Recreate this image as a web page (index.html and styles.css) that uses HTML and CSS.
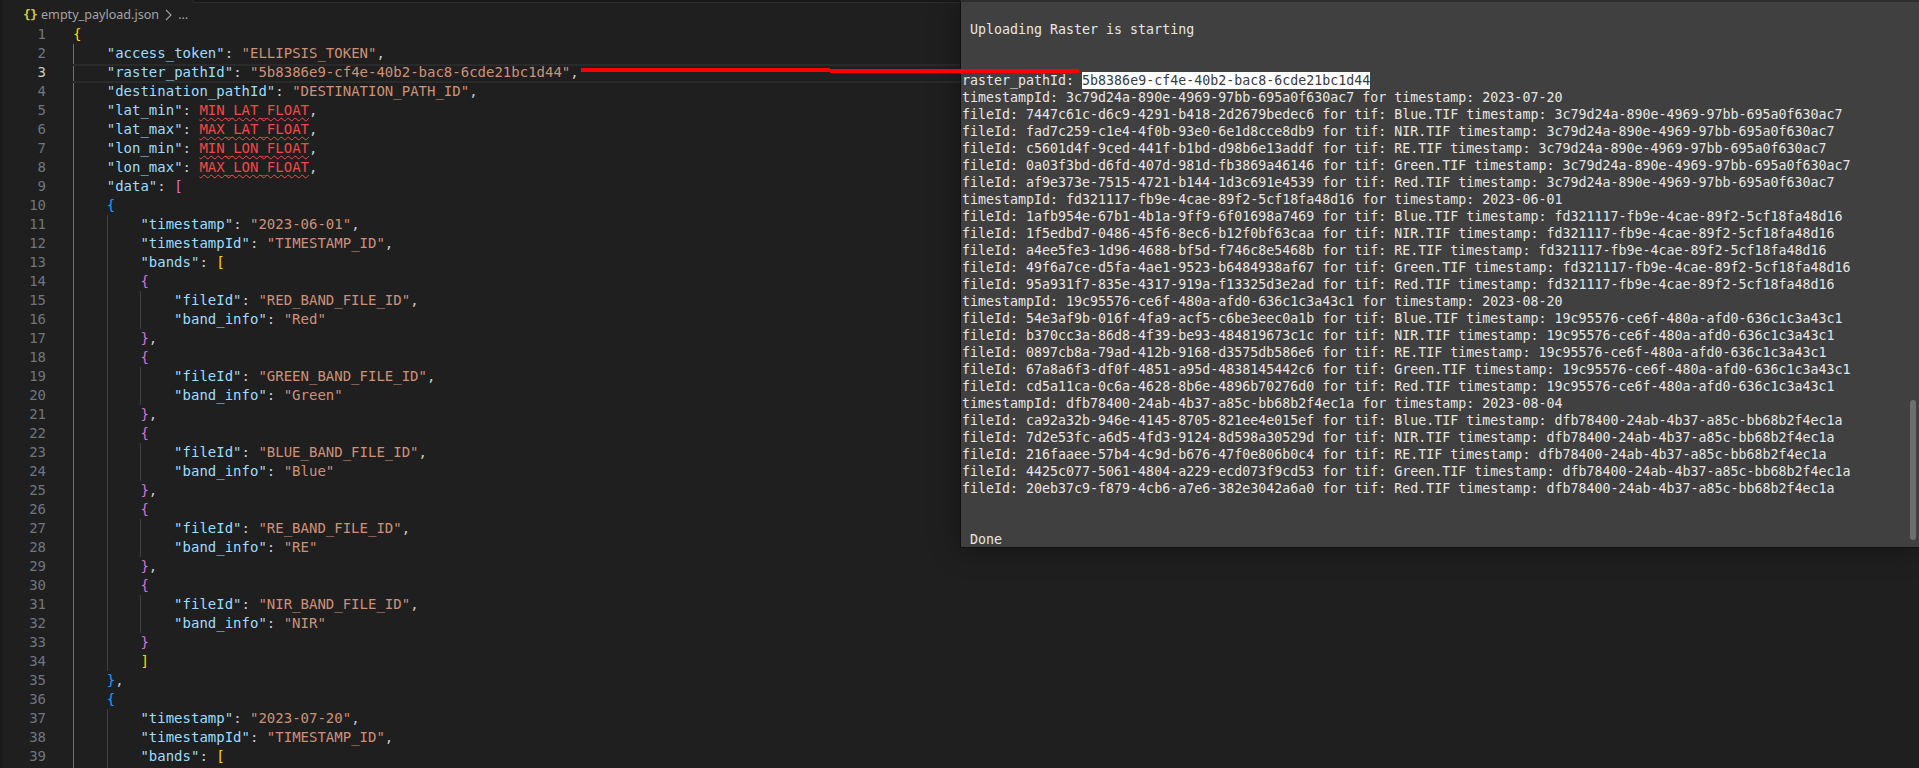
FILE: index.html
```html
<!DOCTYPE html>
<html lang="en">
<head>
<meta charset="utf-8">
<title>empty_payload.json</title>
<link rel="stylesheet" href="styles.css">
</head>
<body>
<main class="editor">
  <div class="tabstrip"><div class="tabstrip-rest"></div></div>
  <nav class="crumbs">
    <span class="file-icon"><span class="ic-a">{</span><span class="ic-b">}</span></span>
    <span class="crumb">empty_payload.json</span>
    <svg class="chev" width="7" height="12" viewBox="0 0 7 12"><path d="M1 1l5 5-5 5" fill="none" stroke="#a0a0a0" stroke-width="1.1"/></svg>
    <span class="crumb">…</span>
  </nav>
  <div class="code">
    <div class="ln"><span class="num">1</span><span class="txt"><b class="y">{</b></span></div>
    <div class="ln"><span class="num">2</span><span class="txt"><i class="g a"></i><b class="k">"access_token"</b>: <b class="s">"ELLIPSIS_TOKEN"</b>,</span></div>
    <div class="ln cur"><span class="num">3</span><span class="txt"><i class="g a"></i><b class="k">"raster_pathId"</b>: <b class="s">"5b8386e9-cf4e-40b2-bac8-6cde21bc1d44"</b>,</span></div>
    <div class="ln"><span class="num">4</span><span class="txt"><i class="g a"></i><b class="k">"destination_pathId"</b>: <b class="s">"DESTINATION_PATH_ID"</b>,</span></div>
    <div class="ln"><span class="num">5</span><span class="txt"><i class="g a"></i><b class="k">"lat_min"</b>: <b class="e">MIN_LAT_FLOAT</b>,</span></div>
    <div class="ln"><span class="num">6</span><span class="txt"><i class="g a"></i><b class="k">"lat_max"</b>: <b class="e">MAX_LAT_FLOAT</b>,</span></div>
    <div class="ln"><span class="num">7</span><span class="txt"><i class="g a"></i><b class="k">"lon_min"</b>: <b class="e">MIN_LON_FLOAT</b>,</span></div>
    <div class="ln"><span class="num">8</span><span class="txt"><i class="g a"></i><b class="k">"lon_max"</b>: <b class="e">MAX_LON_FLOAT</b>,</span></div>
    <div class="ln"><span class="num">9</span><span class="txt"><i class="g a"></i><b class="k">"data"</b>: <b class="p">[</b></span></div>
    <div class="ln"><span class="num">10</span><span class="txt"><i class="g a"></i><b class="b">{</b></span></div>
    <div class="ln"><span class="num">11</span><span class="txt"><i class="g a"></i><i class="g"></i><b class="k">"timestamp"</b>: <b class="s">"2023-06-01"</b>,</span></div>
    <div class="ln"><span class="num">12</span><span class="txt"><i class="g a"></i><i class="g"></i><b class="k">"timestampId"</b>: <b class="s">"TIMESTAMP_ID"</b>,</span></div>
    <div class="ln"><span class="num">13</span><span class="txt"><i class="g a"></i><i class="g"></i><b class="k">"bands"</b>: <b class="y">[</b></span></div>
    <div class="ln"><span class="num">14</span><span class="txt"><i class="g a"></i><i class="g"></i><b class="p">{</b></span></div>
    <div class="ln"><span class="num">15</span><span class="txt"><i class="g a"></i><i class="g"></i><i class="g"></i><b class="k">"fileId"</b>: <b class="s">"RED_BAND_FILE_ID"</b>,</span></div>
    <div class="ln"><span class="num">16</span><span class="txt"><i class="g a"></i><i class="g"></i><i class="g"></i><b class="k">"band_info"</b>: <b class="s">"Red"</b></span></div>
    <div class="ln"><span class="num">17</span><span class="txt"><i class="g a"></i><i class="g"></i><b class="p">}</b>,</span></div>
    <div class="ln"><span class="num">18</span><span class="txt"><i class="g a"></i><i class="g"></i><b class="p">{</b></span></div>
    <div class="ln"><span class="num">19</span><span class="txt"><i class="g a"></i><i class="g"></i><i class="g"></i><b class="k">"fileId"</b>: <b class="s">"GREEN_BAND_FILE_ID"</b>,</span></div>
    <div class="ln"><span class="num">20</span><span class="txt"><i class="g a"></i><i class="g"></i><i class="g"></i><b class="k">"band_info"</b>: <b class="s">"Green"</b></span></div>
    <div class="ln"><span class="num">21</span><span class="txt"><i class="g a"></i><i class="g"></i><b class="p">}</b>,</span></div>
    <div class="ln"><span class="num">22</span><span class="txt"><i class="g a"></i><i class="g"></i><b class="p">{</b></span></div>
    <div class="ln"><span class="num">23</span><span class="txt"><i class="g a"></i><i class="g"></i><i class="g"></i><b class="k">"fileId"</b>: <b class="s">"BLUE_BAND_FILE_ID"</b>,</span></div>
    <div class="ln"><span class="num">24</span><span class="txt"><i class="g a"></i><i class="g"></i><i class="g"></i><b class="k">"band_info"</b>: <b class="s">"Blue"</b></span></div>
    <div class="ln"><span class="num">25</span><span class="txt"><i class="g a"></i><i class="g"></i><b class="p">}</b>,</span></div>
    <div class="ln"><span class="num">26</span><span class="txt"><i class="g a"></i><i class="g"></i><b class="p">{</b></span></div>
    <div class="ln"><span class="num">27</span><span class="txt"><i class="g a"></i><i class="g"></i><i class="g"></i><b class="k">"fileId"</b>: <b class="s">"RE_BAND_FILE_ID"</b>,</span></div>
    <div class="ln"><span class="num">28</span><span class="txt"><i class="g a"></i><i class="g"></i><i class="g"></i><b class="k">"band_info"</b>: <b class="s">"RE"</b></span></div>
    <div class="ln"><span class="num">29</span><span class="txt"><i class="g a"></i><i class="g"></i><b class="p">}</b>,</span></div>
    <div class="ln"><span class="num">30</span><span class="txt"><i class="g a"></i><i class="g"></i><b class="p">{</b></span></div>
    <div class="ln"><span class="num">31</span><span class="txt"><i class="g a"></i><i class="g"></i><i class="g"></i><b class="k">"fileId"</b>: <b class="s">"NIR_BAND_FILE_ID"</b>,</span></div>
    <div class="ln"><span class="num">32</span><span class="txt"><i class="g a"></i><i class="g"></i><i class="g"></i><b class="k">"band_info"</b>: <b class="s">"NIR"</b></span></div>
    <div class="ln"><span class="num">33</span><span class="txt"><i class="g a"></i><i class="g"></i><b class="p">}</b></span></div>
    <div class="ln"><span class="num">34</span><span class="txt"><i class="g a"></i><i class="g"></i><b class="y">]</b></span></div>
    <div class="ln"><span class="num">35</span><span class="txt"><i class="g a"></i><b class="b">}</b>,</span></div>
    <div class="ln"><span class="num">36</span><span class="txt"><i class="g a"></i><b class="b">{</b></span></div>
    <div class="ln"><span class="num">37</span><span class="txt"><i class="g a"></i><i class="g"></i><b class="k">"timestamp"</b>: <b class="s">"2023-07-20"</b>,</span></div>
    <div class="ln"><span class="num">38</span><span class="txt"><i class="g a"></i><i class="g"></i><b class="k">"timestampId"</b>: <b class="s">"TIMESTAMP_ID"</b>,</span></div>
    <div class="ln"><span class="num">39</span><span class="txt"><i class="g a"></i><i class="g"></i><b class="k">"bands"</b>: <b class="y">[</b></span></div>
    <div class="ln"><span class="num"></span><span class="txt"><i class="g a"></i><i class="g"></i></span></div>
  </div>
</main>

<section class="window">
  <p class="msg">Uploading Raster is starting</p>
  <div class="log">
    <div>raster_pathId: <span class="sel">5b8386e9-cf4e-40b2-bac8-6cde21bc1d44</span></div>
    <div>timestampId: 3c79d24a-890e-4969-97bb-695a0f630ac7 for timestamp: 2023-07-20</div>
    <div>fileId: 7447c61c-d6c9-4291-b418-2d2679bedec6 for tif: Blue.TIF timestamp: 3c79d24a-890e-4969-97bb-695a0f630ac7</div>
    <div>fileId: fad7c259-c1e4-4f0b-93e0-6e1d8cce8db9 for tif: NIR.TIF timestamp: 3c79d24a-890e-4969-97bb-695a0f630ac7</div>
    <div>fileId: c5601d4f-9ced-441f-b1bd-d98b6e13addf for tif: RE.TIF timestamp: 3c79d24a-890e-4969-97bb-695a0f630ac7</div>
    <div>fileId: 0a03f3bd-d6fd-407d-981d-fb3869a46146 for tif: Green.TIF timestamp: 3c79d24a-890e-4969-97bb-695a0f630ac7</div>
    <div>fileId: af9e373e-7515-4721-b144-1d3c691e4539 for tif: Red.TIF timestamp: 3c79d24a-890e-4969-97bb-695a0f630ac7</div>
    <div>timestampId: fd321117-fb9e-4cae-89f2-5cf18fa48d16 for timestamp: 2023-06-01</div>
    <div>fileId: 1afb954e-67b1-4b1a-9ff9-6f01698a7469 for tif: Blue.TIF timestamp: fd321117-fb9e-4cae-89f2-5cf18fa48d16</div>
    <div>fileId: 1f5edbd7-0486-45f6-8ec6-b12f0bf63caa for tif: NIR.TIF timestamp: fd321117-fb9e-4cae-89f2-5cf18fa48d16</div>
    <div>fileId: a4ee5fe3-1d96-4688-bf5d-f746c8e5468b for tif: RE.TIF timestamp: fd321117-fb9e-4cae-89f2-5cf18fa48d16</div>
    <div>fileId: 49f6a7ce-d5fa-4ae1-9523-b6484938af67 for tif: Green.TIF timestamp: fd321117-fb9e-4cae-89f2-5cf18fa48d16</div>
    <div>fileId: 95a931f7-835e-4317-919a-f13325d3e2ad for tif: Red.TIF timestamp: fd321117-fb9e-4cae-89f2-5cf18fa48d16</div>
    <div>timestampId: 19c95576-ce6f-480a-afd0-636c1c3a43c1 for timestamp: 2023-08-20</div>
    <div>fileId: 54e3af9b-016f-4fa9-acf5-c6be3eec0a1b for tif: Blue.TIF timestamp: 19c95576-ce6f-480a-afd0-636c1c3a43c1</div>
    <div>fileId: b370cc3a-86d8-4f39-be93-484819673c1c for tif: NIR.TIF timestamp: 19c95576-ce6f-480a-afd0-636c1c3a43c1</div>
    <div>fileId: 0897cb8a-79ad-412b-9168-d3575db586e6 for tif: RE.TIF timestamp: 19c95576-ce6f-480a-afd0-636c1c3a43c1</div>
    <div>fileId: 67a8a6f3-df0f-4851-a95d-4838145442c6 for tif: Green.TIF timestamp: 19c95576-ce6f-480a-afd0-636c1c3a43c1</div>
    <div>fileId: cd5a11ca-0c6a-4628-8b6e-4896b70276d0 for tif: Red.TIF timestamp: 19c95576-ce6f-480a-afd0-636c1c3a43c1</div>
    <div>timestampId: dfb78400-24ab-4b37-a85c-bb68b2f4ec1a for timestamp: 2023-08-04</div>
    <div>fileId: ca92a32b-946e-4145-8705-821ee4e015ef for tif: Blue.TIF timestamp: dfb78400-24ab-4b37-a85c-bb68b2f4ec1a</div>
    <div>fileId: 7d2e53fc-a6d5-4fd3-9124-8d598a30529d for tif: NIR.TIF timestamp: dfb78400-24ab-4b37-a85c-bb68b2f4ec1a</div>
    <div>fileId: 216faaee-57b4-4c9d-b676-47f0e806b0c4 for tif: RE.TIF timestamp: dfb78400-24ab-4b37-a85c-bb68b2f4ec1a</div>
    <div>fileId: 4425c077-5061-4804-a229-ecd073f9cd53 for tif: Green.TIF timestamp: dfb78400-24ab-4b37-a85c-bb68b2f4ec1a</div>
    <div>fileId: 20eb37c9-f879-4cb6-a7e6-382e3042a6a0 for tif: Red.TIF timestamp: dfb78400-24ab-4b37-a85c-bb68b2f4ec1a</div>
  </div>
  <p class="msg done">Done</p>
  <div class="thumb"></div>
</section>

<svg class="arrow" width="498" height="5" viewBox="0 0 498 5"><path d="M0 0H249V1H498V5H249V4H0Z" fill="#ff0000"/></svg>
</body>
</html>
```

FILE: styles.css
```css
html, body {
  margin: 0;
  height: 768px;
  overflow: hidden;
  background: #1f1f1f;
}
body {
  position: relative;
}
.editor {
  height: 768px;
  overflow: hidden;
  border-left: 2px solid #1a1a1a;
  box-sizing: border-box;
}
.tabstrip {
  height: 3px;
  box-sizing: border-box;
  padding-left: 191px;
}
.tabstrip-rest {
  height: 3px;
  box-sizing: border-box;
  background: #191919;
  border-left: 1px solid #2b2b2b;
  border-bottom: 1px solid #2b2b2b;
}
.crumbs {
  height: 22px;
  display: flex;
  align-items: center;
  padding-left: 21px;
  font: 12.6px "Noto Sans", sans-serif;
  color: #a3a3a3;
}
.file-icon {
  width: 18px;
  display: flex;
  gap: 3px;
  font: 13px "DejaVu Sans Mono", monospace;
  font-weight: bold;
}
.ic-a { color: #cbcb41; width: 4px; }
.ic-b { color: #cbcb41; width: 4px; }
.crumb { white-space: pre; }
.chev { margin: 1px 6px 0 6px; }
.code {
  font: 14px/19px "DejaVu Sans Mono", monospace;
  color: #cccccc;
}
.ln {
  display: flex;
  height: 19px;
  white-space: pre;
}
.num {
  width: 44px;
  margin-right: 27px;
  flex: none;
  text-align: right;
  color: #6e7681;
}
.txt {
  flex: 1;
  display: block;
  box-sizing: border-box;
}
.txt b { font-weight: normal; }
.cur .num { color: #cccccc; }
.cur .txt { position: relative; }
.cur .txt::after {
  content: "";
  position: absolute;
  inset: 1px 0 -1px 0;
  border: solid #2a2a2a;
  border-width: 2px 0;
  pointer-events: none;
}
.g {
  display: inline-block;
  vertical-align: top;
  width: 4ch;
  height: 19px;
  box-sizing: border-box;
  border-left: 1px solid #404040;
}
.g.a { border-left-color: #707070; }
.k { color: #9cdcfe; }
.s { color: #ce9178; }
.e {
  color: #f44747;
  text-decoration: underline wavy #f14c4c 1px;
  text-underline-offset: 2px;
}
.y { color: #ffd700; }
.p { color: #da70d6; }
.b { color: #179fff; }
.window {
  position: absolute;
  left: 960px;
  top: 0;
  right: 0;
  height: 548px;
  box-sizing: border-box;
  padding: 19px 0 0 1px;
  background: #404040;
  border-top: 2px solid #2e2e2e;
  border-left: 1px solid #101010;
  border-bottom: 1px solid #101010;
  box-shadow: 0 0 28px rgba(0, 0, 0, .35);
  font: 13.3px/17px "DejaVu Sans Mono", monospace;
  color: #e6e6e6;
}
.msg {
  margin: 0;
  padding-left: 8px;
  white-space: pre;
}
.log {
  margin-top: 34px;
}
.log > div {
  white-space: pre;
}
.done {
  margin-top: 34px;
}
.sel {
  display: inline-block;
  background: #ffffff;
  color: #3a3a3a;
}
.thumb {
  position: absolute;
  right: 3px;
  top: 398px;
  width: 6px;
  height: 140px;
  border-radius: 3px;
  background: #6e6e6e;
}
.arrow {
  position: absolute;
  left: 581px;
  top: 68px;
  display: block;
}
```
